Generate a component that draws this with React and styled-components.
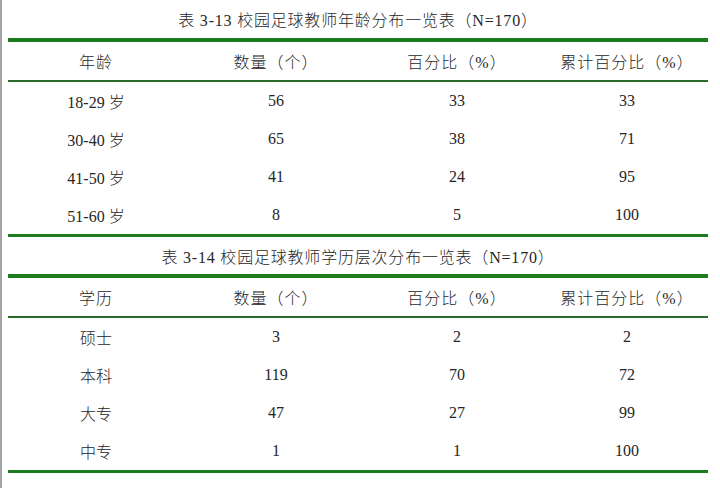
import React from "react";
import styled, { createGlobalStyle } from "styled-components";

const GlobalStyle = createGlobalStyle`
  html, body {
    margin: 0;
    padding: 0;
    background: #fff;
  }
  body {
    font-family: "Liberation Serif", "Noto Sans CJK SC", serif;
    color: #262626;
  }
`;

const green = "#1d7a1d";
const darkGreen = "#2a6a2a";

const tables = [
  {
    title: "表 3-13 校园足球教师年龄分布一览表（N=170）",
    head: ["年龄", "数量（个）", "百分比（%）", "累计百分比（%）"],
    rows: [
      ["18-29 岁", "56", "33", "33"],
      ["30-40 岁", "65", "38", "71"],
      ["41-50 岁", "41", "24", "95"],
      ["51-60 岁", "8", "5", "100"],
    ],
  },
  {
    title: "表 3-14 校园足球教师学历层次分布一览表（N=170）",
    head: ["学历", "数量（个）", "百分比（%）", "累计百分比（%）"],
    rows: [
      ["硕士", "3", "2", "2"],
      ["本科", "119", "70", "72"],
      ["大专", "47", "27", "99"],
      ["中专", "1", "1", "100"],
    ],
  },
];

const Page = styled.div`
  min-height: 488px;
  box-sizing: border-box;
  border-left: 2px solid #a3a3a3;
  padding: 0 12px 0 6px;
`;

const Title = styled.div`
  height: ${(p) => p.$height}px;
  display: flex;
  align-items: center;
  justify-content: center;
  font-size: 16px;
  letter-spacing: 0.8px;
  font-weight: 300;
`;

const Table = styled.div`
  width: 700px;
  border-top: 4px solid ${green};
  border-bottom: 3px solid ${green};
`;

const Row = styled.div`
  display: grid;
  grid-template-columns: 176px 184px 178px 162px;
  height: 38px;
  align-items: center;
  font-size: 16px;
  font-weight: 300;
  border-bottom: ${(p) => (p.$head ? `2px solid ${darkGreen}` : "none")};
  letter-spacing: ${(p) => (p.$head ? "1px" : "0")};
`;

const Cell = styled.div`
  text-align: center;
  white-space: pre;
`;

const Block = ({ data, titleHeight }) => (
  <>
    <Title $height={titleHeight}>{data.title}</Title>
    <Table>
      <Row $head>
        {data.head.map((h) => (
          <Cell key={h}>{h}</Cell>
        ))}
      </Row>
      {data.rows.map((r) => (
        <Row key={r[0]}>
          {r.map((c, i) => (
            <Cell key={i}>{c}</Cell>
          ))}
        </Row>
      ))}
    </Table>
  </>
);

export default function App() {
  return (
    <Page>
      <GlobalStyle />
      <Block data={tables[0]} titleHeight={38} />
      <Block data={tables[1]} titleHeight={37} />
    </Page>
  );
}
